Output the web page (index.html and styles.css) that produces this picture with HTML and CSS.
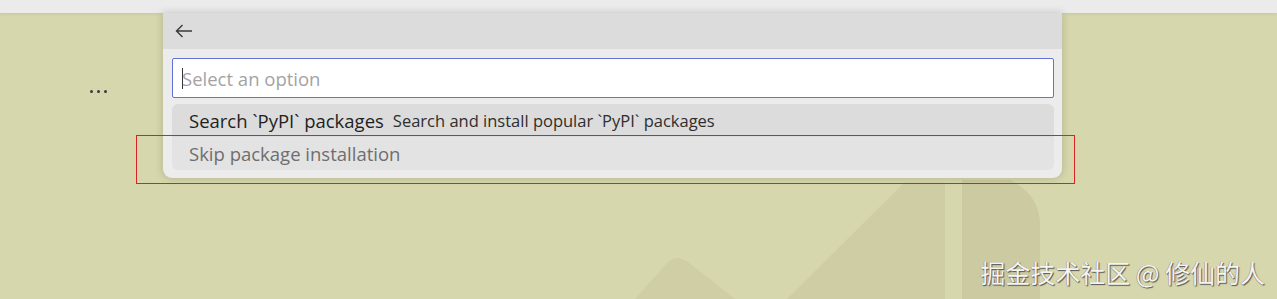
FILE: index.html
```html
<!DOCTYPE html>
<html>
<head>
<meta charset="utf-8">
<link rel="stylesheet" href="styles.css">
</head>
<body>
<div class="topstrip"></div>
<div class="stage">
  <svg class="bgshapes" width="1277" height="299" viewBox="0 0 1277 299">
    <path d="M787 299 L905 182 L945 182 L945 299 Z" fill="#cecda4"/>
    <path d="M962 180 L1010 180 Q1040 195 1040 225 L1040 299 L962 299 Z" fill="#cbcaa1"/>
    <path d="M635 299 L668 262 Q677 254 688 262 L735 299 Z" fill="#cfcea5"/>
  </svg>
  <div class="dots"><span></span><span></span><span></span></div>
  <div class="picker">
    <div class="picker-head">
      <svg class="back" width="20" height="16" viewBox="0 0 20 16">
        <path d="M18 8 H2.5 M8.5 2 L2.5 8 L8.5 14" fill="none" stroke="#3a3a3a" stroke-width="1.4"/>
      </svg>
    </div>
    <div class="picker-body">
      <div class="input"><span class="caret"></span><span class="ph">Select an option</span></div>
      <div class="list">
        <div class="item active"><span class="label">Search `PyPI` packages</span><span class="desc">Search and install popular `PyPI` packages</span></div>
        <div class="item"><span class="label muted">Skip package installation</span></div>
      </div>
    </div>
  </div>
  <div class="redbox"></div>
  <div class="watermark">掘金技术社区 @ 修仙的人</div>
</div>
</body>
</html>
```
FILE: styles.css
```css
html, body {
  margin: 0;
  padding: 0;
  width: 1277px;
  height: 299px;
  overflow: hidden;
  background: #d7d7ad;
  font-family: "Open Sans", "Noto Sans", sans-serif;
}
.topstrip {
  height: 13px;
  background: #ebebeb;
  box-shadow: 0 1px 3px rgba(0,0,0,0.08);
}
.stage {
  position: relative;
  height: 286px;
}
.bgshapes {
  position: absolute;
  left: 0;
  top: -13px;
}
.dots {
  position: absolute;
  left: 90px;
  top: 77px;
  display: flex;
  gap: 4px;
}
.dots span {
  width: 3px;
  height: 3px;
  border-radius: 50%;
  background: #3a3a40;
}
.picker {
  position: absolute;
  left: 163px;
  top: 0;
  width: 899px;
  height: 165px;
  background: #ececec;
  border-radius: 0 0 9px 9px;
  box-shadow: 0 0 8px rgba(0,0,0,0.18);
  overflow: hidden;
}
.picker-head {
  height: 36px;
  background: #dcdcdc;
  display: flex;
  align-items: center;
  padding-left: 11px;
}
.back { display: block; }
.picker-body {
  padding: 9px 8px 0 9px;
}
.input {
  height: 38px;
  background: #fff;
  border: 1px solid #6272d8;
  border-radius: 2px;
  display: flex;
  align-items: center;
  padding-left: 9px;
}
.caret {
  width: 1px;
  height: 21px;
  background: #333;
}
.ph {
  font-size: 18.5px;
  color: #a3a3a3;
  margin-left: -1px;
}
.list {
  margin-top: 6px;
}
.item {
  height: 33px;
  display: flex;
  align-items: center;
  padding-left: 17px;
  background: #e3e3e3;
  border-radius: 0 0 6px 6px;
}
.item.active {
  background: #dcdcdc;
  border-radius: 6px 6px 0 0;
}
.label {
  font-size: 18.5px;
  color: #1f1f1f;
}
.label.muted { color: #6e6e6e; }
.desc {
  font-size: 16.5px;
  color: #2e2e2e;
  margin-left: 9px;
}
.redbox {
  position: absolute;
  left: 136px;
  top: 122px;
  width: 937px;
  height: 47px;
  border: 1px solid #d82424;
}
.watermark {
  position: absolute;
  right: 12px;
  top: 241px;
  font-family: "Noto Sans CJK SC", sans-serif;
  font-size: 25px;
  color: #f4f4f0;
  text-shadow: 1px 1px 1px #555, -0.5px -0.5px 0 #888;
}
```
